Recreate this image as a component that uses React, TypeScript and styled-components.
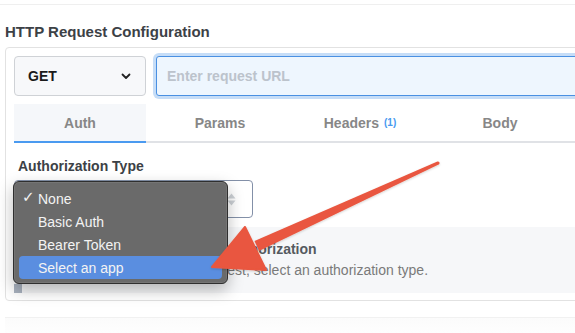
import React from "react";
import styled, { createGlobalStyle } from "styled-components";

const GlobalStyle = createGlobalStyle`
  html, body {
    margin: 0;
    padding: 0;
    background: #ffffff;
    overflow: hidden;
    font-family: "Liberation Sans", Arial, sans-serif;
  }
`;

const Page = styled.div`
  position: relative;
  width: 600px;
  height: 333px;
  overflow: hidden;
`;

const TopRule = styled.div`
  height: 4px;
  border-bottom: 1px solid #efefef;
`;

const Section = styled.section`
  padding-left: 5px;
`;

const Title = styled.h2`
  margin: 18px 0 6px;
  font-size: 15px;
  line-height: 18px;
  font-weight: 700;
  color: #3c4146;
`;

const Card = styled.div`
  border: 1px solid #e2e2e2;
  border-radius: 4px;
  padding: 8px 0 7px 8px;
  width: 620px;
`;

const RequestRow = styled.div`
  display: flex;
  align-items: center;
`;

const MethodSelect = styled.div`
  box-sizing: border-box;
  width: 132px;
  height: 40px;
  display: flex;
  align-items: center;
  justify-content: space-between;
  padding: 0 14px 0 13px;
  background: #f7f8fa;
  border: 1px solid #cfd2d6;
  border-radius: 4px;
  font-size: 14px;
  font-weight: 700;
  color: #1a1a1a;
`;

const UrlInput = styled.div`
  box-sizing: border-box;
  flex: 1;
  margin-left: 10px;
  height: 40px;
  display: flex;
  align-items: center;
  padding-left: 10px;
  background: #eef6fe;
  border: 1px solid #4a90e2;
  border-radius: 3px;
  box-shadow: 0 0 0 3px #c6ddf7;
  font-size: 14px;
  font-weight: 700;
  color: #bcc3cc;
`;

const TabBar = styled.div`
  margin-top: 8px;
  display: flex;
  gap: 8px;
  border-bottom: 2px solid #e0e2e6;
`;

const Tab = styled.div<{ $active?: boolean }>`
  box-sizing: border-box;
  width: 132px;
  height: 39px;
  margin-bottom: -2px;
  display: flex;
  align-items: center;
  justify-content: center;
  gap: 5px;
  font-size: 14px;
  font-weight: 700;
  color: #878787;
  background: ${(p) => (p.$active ? "#f5f7fa" : "transparent")};
  border-bottom: 2px solid ${(p) => (p.$active ? "#4a9af0" : "transparent")};
`;

const Count = styled.span`
  font-size: 10px;
  font-weight: 700;
  color: #4a9af0;
`;

const FieldLabel = styled.div`
  margin-top: 15px;
  padding-left: 4px;
  font-size: 14px;
  line-height: 17px;
  font-weight: 700;
  color: #3c4146;
`;

const AuthSelect = styled.div`
  box-sizing: border-box;
  margin-top: 5px;
  width: 239px;
  height: 38px;
  border: 1px solid #8390a8;
  border-radius: 4px;
  display: flex;
  align-items: center;
  justify-content: flex-end;
  padding-right: 16px;
`;

const InfoBox = styled.div`
  margin-top: 9px;
  padding: 12px 14px;
  background: #f6f7f9;
  font-size: 14px;
  line-height: 21px;
`;

const InfoTitle = styled.div`
  font-weight: 700;
  color: #555a60;
`;

const InfoText = styled.div`
  color: #7a7a7a;
`;

const NextSection = styled.div`
  margin-top: 16px;
  height: 20px;
  border-top: 1px solid #f1f1f1;
  background: linear-gradient(#fbfbfb, #ffffff);
`;

const Menu = styled.div`
  position: absolute;
  left: 13px;
  top: 181px;
  box-sizing: border-box;
  width: 215px;
  height: 103px;
  padding: 5px 5px 4px;
  background: #6a6a6a;
  border: 1px solid #2f2f2f;
  border-radius: 6px;
  box-shadow: 0 6px 16px rgba(0, 0, 0, 0.28), inset 0 0 0 1px rgba(255, 255, 255, 0.08);
  z-index: 2;
`;

const MenuItem = styled.div<{ $highlighted?: boolean }>`
  position: relative;
  height: 23px;
  display: flex;
  align-items: center;
  padding-left: 19px;
  border-radius: 4px;
  font-size: 14px;
  color: #f3f3f3;
  background: ${(p) => (p.$highlighted ? "#5a8ee0" : "transparent")};
`;

const Check = styled.span`
  position: absolute;
  left: 3px;
  top: 1px;
  font-family: "DejaVu Sans", sans-serif;
  font-size: 15px;
  color: #f3f3f3;
`;

const MenuTail = styled.div`
  position: absolute;
  left: 14px;
  top: 284px;
  width: 8px;
  height: 9px;
  background: #aab3c0;
  z-index: 1;
`;

const ArrowLayer = styled.svg`
  position: absolute;
  left: 0;
  top: 0;
  width: 575px;
  height: 333px;
  pointer-events: none;
  z-index: 3;
`;

function Chevron() {
  return (
    <svg width="10" height="7" viewBox="0 0 10 7">
      <path d="M1.5 1.5 L5 5 L8.5 1.5" fill="none" stroke="#222" strokeWidth="1.8" strokeLinecap="round" strokeLinejoin="round" />
    </svg>
  );
}

function Stepper() {
  return (
    <svg width="9" height="13" viewBox="0 0 9 13">
      <path d="M4.5 0.5 L8.5 5.5 L0.5 5.5 Z" fill="#cdd1d6" />
      <path d="M4.5 12.5 L8.5 7.5 L0.5 7.5 Z" fill="#cdd1d6" />
    </svg>
  );
}

export default function App() {
  return (
    <>
      <GlobalStyle />
      <Page>
        <TopRule />
        <Section>
          <Title>HTTP Request Configuration</Title>
          <Card>
            <RequestRow>
              <MethodSelect>
                <span>GET</span>
                <Chevron />
              </MethodSelect>
              <UrlInput>Enter request URL</UrlInput>
            </RequestRow>
            <TabBar>
              <Tab $active>Auth</Tab>
              <Tab>Params</Tab>
              <Tab>
                Headers <Count>(1)</Count>
              </Tab>
              <Tab>Body</Tab>
            </TabBar>
            <FieldLabel>Authorization Type</FieldLabel>
            <AuthSelect>
              <Stepper />
            </AuthSelect>
            <InfoBox>
              <InfoTitle>This request does not require authorization</InfoTitle>
              <InfoText>To add authorization to this request, select an authorization type.</InfoText>
            </InfoBox>
          </Card>
          <NextSection />
        </Section>

        <MenuTail />
        <Menu>
          <MenuItem>
            <Check>✓</Check>None
          </MenuItem>
          <MenuItem>Basic Auth</MenuItem>
          <MenuItem>Bearer Token</MenuItem>
          <MenuItem $highlighted>Select an app</MenuItem>
        </Menu>

        <ArrowLayer viewBox="0 0 575 333">
          <defs>
            <filter id="arrowShadow" x="-10%" y="-10%" width="120%" height="130%">
              <feDropShadow dx="0" dy="1" stdDeviation="1.2" floodColor="#000" floodOpacity="0.18" />
            </filter>
          </defs>
          <g filter="url(#arrowShadow)" fill="#e9573f">
            <path d="M438.6 164.4 L259 251 L254.5 241 L437.4 161.6 Z" />
            <circle cx="438" cy="163" r="1.6" />
            <path d="M245 227 L212 267 L266 270 Z" strokeLinejoin="round" stroke="#e9573f" strokeWidth="2" />
          </g>
        </ArrowLayer>
      </Page>
    </>
  );
}
